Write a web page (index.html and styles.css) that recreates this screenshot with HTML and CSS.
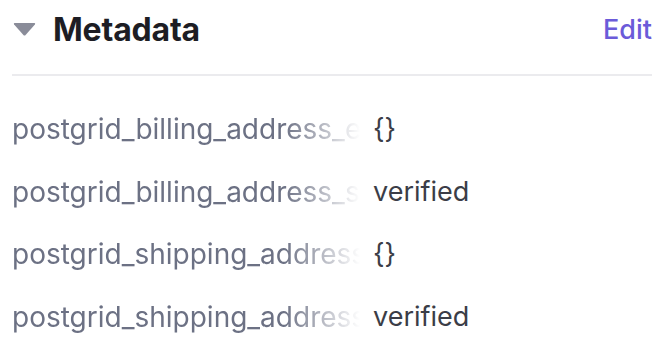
FILE: index.html
```html
<!DOCTYPE html>
<html lang="en">
<head>
    <meta charset="UTF-8">
    <meta name="viewport" content="width=device-width, initial-scale=1.0">
    <title>Metadata</title>
    <link rel="stylesheet" href="styles.css">
</head>
<body>
    <div class="panel">
        <div class="panel-header">
            <div class="panel-title">
                <svg class="caret" width="23" height="14" viewBox="0 0 23 14">
                    <path d="M1.8 1 H21.2 Q22.8 1 21.9 2.4 L12.6 12.9 Q11.5 14 10.4 12.9 L1.1 2.4 Q0.2 1 1.8 1 Z" fill="#8a8c99"/>
                </svg>
                <h2>Metadata</h2>
            </div>
            <a href="#" class="edit-link">Edit</a>
        </div>
        <div class="meta-list">
            <div class="meta-row">
                <div class="meta-key">postgrid_billing_address_error</div>
                <div class="meta-value">{}</div>
            </div>
            <div class="meta-row">
                <div class="meta-key">postgrid_billing_address_status</div>
                <div class="meta-value">verified</div>
            </div>
            <div class="meta-row">
                <div class="meta-key">postgrid_shipping_address_error</div>
                <div class="meta-value">{}</div>
            </div>
            <div class="meta-row">
                <div class="meta-key">postgrid_shipping_address_status</div>
                <div class="meta-value">verified</div>
            </div>
        </div>
    </div>
</body>
</html>
```

FILE: styles.css
```css
* {
    margin: 0;
    padding: 0;
    box-sizing: border-box;
    font-family: 'Inter', 'Noto Sans', sans-serif;
}

body {
    background: #fff;
}

.panel {
    padding: 0 20px 0 12px;
}

.panel-header {
    display: flex;
    justify-content: space-between;
    align-items: center;
    height: 76px;
    padding-bottom: 16px;
    border-bottom: 2px solid #ebebee;
}

.panel-title {
    display: flex;
    align-items: center;
    gap: 17px;
}

.caret {
    display: block;
    margin-left: 1px;
}

.panel-title h2 {
    font-size: 32px;
    font-weight: 700;
    color: #1d1d24;
    letter-spacing: -0.2px;
}

.edit-link {
    color: #6b5bd9;
    font-size: 27px;
    font-weight: 500;
    text-decoration: none;
}

.meta-list {
    margin-top: 22px;
}

.meta-row {
    display: grid;
    grid-template-columns: 348px 1fr;
    column-gap: 13px;
    height: 62.7px;
    line-height: 62.7px;
    font-size: 27px;
}

.meta-key {
    font-size: 28px;
    color: #6c7184;
    white-space: nowrap;
    overflow: hidden;
    -webkit-mask-image: linear-gradient(to right, #000 78%, transparent 100%);
    mask-image: linear-gradient(to right, #000 78%, transparent 100%);
}

.meta-value {
    color: #3b3d47;
}
```
